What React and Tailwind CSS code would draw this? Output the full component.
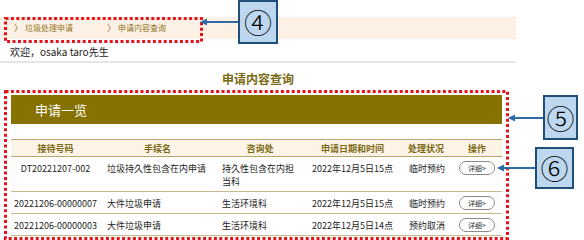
import React from 'react';

const rows = [
  { no: 'DT20221207-002', name: '垃圾持久性包含在内申请', dept: '持久性包含在内担当科', date: '2022年12月5日15点', status: '临时预约' },
  { no: '20221206-00000007', name: '大件垃圾申请', dept: '生活环境科', date: '2022年12月5日15点', status: '临时预约' },
  { no: '20221206-00000003', name: '大件垃圾申请', dept: '生活环境科', date: '2022年12月5日14点', status: '预约取消' },
];

const font = { fontFamily: '"Noto Sans CJK SC", "Noto Sans", sans-serif' };

// annotation: dotted red frame
const RedFrame = ({ className }) => (
  <svg className={`absolute ${className}`} width="100%" height="100%" preserveAspectRatio="none">
    <rect x="1.5" y="1.5" width="calc(100% - 3px)" height="calc(100% - 3px)" fill="none" stroke="#e3121b" strokeWidth="3" strokeDasharray="3 2.4" />
  </svg>
);

const Callout = ({ num, className }) => (
  <div className={`absolute flex items-center justify-center bg-[#bdd7ee] border-2 border-[#1f4e79] ${className}`}>
    <span className="text-[28px] leading-none text-black font-light" style={{ fontFamily: '"Noto Sans CJK JP", "Noto Sans CJK SC", sans-serif' }}>{num}</span>
  </div>
);

const Arrow = ({ className, width }) => (
  <svg className={`absolute ${className}`} width={width} height="8" viewBox={`0 0 ${width} 8`}>
    <line x1="5" y1="4" x2={width} y2="4" stroke="#2e6aa3" strokeWidth="2" />
    <polygon points="0,4 7,0.5 7,7.5" fill="#2e6aa3" />
  </svg>
);

export default function App() {
  return (
    <div className="relative w-[584px] h-[240px] overflow-hidden bg-white text-[#222]" style={font}>
      <div className="w-[516px] pt-[17px]">
        {/* breadcrumb */}
        <div className="h-[22px] bg-[#fdf1e5] flex items-center text-[8px] text-[#8f7118]">
          <span className="pl-[14px] pr-[2px] text-[9px]">〉</span>
          <span className="w-[82px]">垃圾处理申请</span>
          <span className="pr-[2px] text-[9px]">〉</span>
          <span>申请内容查询</span>
        </div>
        <div className="pl-[10px] pt-[6px] text-[10px] leading-[13px] h-[22px]">欢迎，osaka taro先生</div>
        <div className="h-[2px] bg-[#e6e6e6]"></div>

        <h1 className="text-center text-[12px] font-bold text-[#7b6a14] leading-[16px] pt-[8px] h-[32px]">申请内容查询</h1>

        <div className="ml-[11px] w-[491px]">
          <div className="h-[29px] bg-[#857200] flex items-center pl-[24px] text-white text-[13px]">申请一览</div>
          <div className="h-[15px]"></div>
          <table className="w-full table-fixed border-collapse text-[9px] leading-[13px]">
            <colgroup>
              <col className="w-[89px]" />
              <col className="w-[115px]" />
              <col className="w-[90px]" />
              <col className="w-[95px]" />
              <col className="w-[52px]" />
              <col className="w-[50px]" />
            </colgroup>
            <thead>
              <tr className="h-[17px] bg-[#fdf3e7] border-t border-b border-[#b8a66c] text-[#7b6a14] font-bold">
                <th className="font-bold text-center">接待号码</th>
                <th className="font-bold text-center">手续名</th>
                <th className="font-bold text-center">咨询处</th>
                <th className="font-bold text-center">申请日期和时间</th>
                <th className="font-bold text-center">处理状况</th>
                <th className="font-bold text-center">操作</th>
              </tr>
            </thead>
            <tbody>
              {rows.map((r) => (
                <tr key={r.no} className="border-b border-[#c9b98c] align-top">
                  <td className="pt-[5px] pb-[3px] text-center">{r.no}</td>
                  <td className="pt-[5px] pb-[3px] pl-[7px]">{r.name}</td>
                  <td className="pt-[5px] pb-[3px] pl-[7px] pr-[4px]">{r.dept}</td>
                  <td className="pt-[5px] pb-[3px] pl-[7px]">{r.date}</td>
                  <td className="pt-[5px] pb-[3px] pl-[9px]">{r.status}</td>
                  <td className="pt-[4px] pb-[3px]">
                    <div className="flex justify-center">
                      <button className="w-[36px] h-[14px] rounded-full border border-[#8a8a8a] bg-white text-[7px] leading-[12px] text-[#333]">详细&gt;</button>
                    </div>
                  </td>
                </tr>
              ))}
            </tbody>
          </table>
        </div>
      </div>

      {/* annotations */}
      <RedFrame className="left-[4px] top-[17px] w-[199px] h-[26px]" />
      <RedFrame className="left-[4px] top-[90px] w-[505px] h-[150px]" />

      <Arrow className="left-[200px] top-[18px]" width={38} />
      <Callout num="④" className="left-[238px] top-0 w-[40px] h-[44px]" />

      <Arrow className="left-[508px] top-[114px]" width={35} />
      <Callout num="⑤" className="left-[543px] top-[95px] w-[35px] h-[45px]" />

      <Arrow className="left-[497px] top-[164px]" width={38} />
      <Callout num="⑥" className="left-[535px] top-[147px] w-[39px] h-[42px]" />
    </div>
  );
}
